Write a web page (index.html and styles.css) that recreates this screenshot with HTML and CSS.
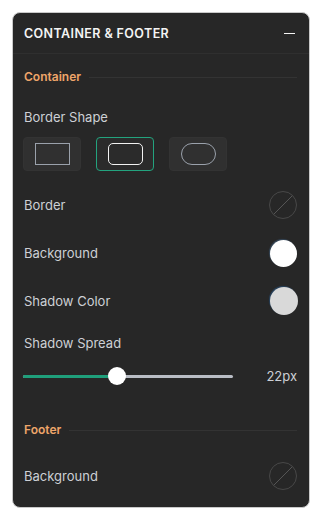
FILE: index.html
```html
<!doctype html>
<html lang="en">

<head>
  <meta charset="utf-8">
  <meta name="viewport" content="width=device-width, initial-scale=1">
  <title>Container &amp; Footer</title>
  <link rel="stylesheet" href="styles.css">
</head>

<body>

  <div class="panel">
    <div class="panel__header">
      <span class="panel__title">Container &amp; Footer</span>
      <button class="panel__toggle" type="button" aria-label="Collapse"></button>
    </div>

    <div class="panel__body">
      <div class="section-title section-title_first">Container</div>

      <div class="field-label">Border Shape</div>
      <div class="shapes">
        <button class="shape" type="button"><span class="shape__icon shape__icon_square"></span></button>
        <button class="shape shape_active" type="button"><span class="shape__icon shape__icon_rounded"></span></button>
        <button class="shape" type="button"><span class="shape__icon shape__icon_pill"></span></button>
      </div>

      <div class="row row_first">
        <span class="row__label">Border</span>
        <span class="swatch swatch_none"></span>
      </div>
      <div class="row">
        <span class="row__label">Background</span>
        <span class="swatch swatch_white"></span>
      </div>
      <div class="row">
        <span class="row__label">Shadow Color</span>
        <span class="swatch swatch_shadow"></span>
      </div>

      <div class="field-label field-label_spread">Shadow Spread</div>
      <div class="slider">
        <div class="slider__track">
          <div class="slider__fill" style="width: 44.8%;"></div>
          <div class="slider__thumb" style="left: 44.8%;"></div>
        </div>
        <span class="slider__value">22px</span>
      </div>

      <div class="section-title section-title_footer">Footer</div>

      <div class="row row_footer">
        <span class="row__label">Background</span>
        <span class="swatch swatch_none"></span>
      </div>
    </div>
  </div>

</body>

</html>
```

FILE: styles.css
```css
body {
  margin: 0;
  padding: 12px;
  font-family: Inter, "Noto Sans", sans-serif;
  background-color: #fff;
}

*,
*::before,
*::after {
  box-sizing: border-box;
}

.panel {
  width: 298px;
  height: 496px;
  background-color: #272727;
  border: 1px solid #c9c9c9;
  border-radius: 8px;
  overflow: hidden;
}

.panel__header {
  display: flex;
  align-items: center;
  justify-content: space-between;
  height: 41px;
  padding: 0 14px 0 11px;
  border-bottom: 1px solid #2f2f2f;
}

.panel__title {
  color: #f4f4f4;
  font-size: 12.5px;
  font-weight: 600;
  letter-spacing: 0.4px;
  text-transform: uppercase;
}

.panel__toggle {
  width: 11px;
  height: 1.5px;
  padding: 0;
  border: 0;
  background-color: #f4f4f4;
  margin-top: 1px;
}

.panel__body {
  padding: 12px 12px 0 11px;
}

.section-title {
  display: flex;
  align-items: center;
  gap: 8px;
  height: 20px;
  color: #eea56a;
  font-size: 12px;
  font-weight: 600;
}

.section-title::after {
  content: "";
  flex: 1;
  height: 1px;
  margin-top: 3px;
  background-color: #333;
}

.field-label {
  height: 20px;
  line-height: 20px;
  margin-top: 21px;
  color: #cdd0d5;
  font-size: 13px;
}

.field-label_spread {
  margin-top: 18px;
}

.shapes {
  display: flex;
  gap: 15px;
  margin: 10px 0 0 -1px;
}

.shape {
  display: flex;
  align-items: center;
  justify-content: center;
  width: 58px;
  height: 34px;
  padding: 0;
  background-color: #303030;
  border: 1px solid #333;
  border-radius: 4px;
}

.shape_active {
  border: 1.5px solid #23a37e;
  background-color: #2b2b2b;
}

.shape__icon {
  width: 35px;
  height: 22px;
  border: 1.5px solid #9aa1ab;
}

.shape__icon_rounded {
  border-color: #f2f2f2;
  border-radius: 5px;
}

.shape__icon_pill {
  border-radius: 11px;
}

.row {
  display: flex;
  align-items: center;
  justify-content: space-between;
  height: 28px;
  margin-top: 20px;
}

.row_footer {
  margin-top: 23px;
}

.row__label {
  color: #cdd0d5;
  font-size: 13px;
}

.swatch {
  width: 28px;
  height: 28px;
  border-radius: 50%;
}

.swatch_none {
  border: 1px solid #484848;
  background: linear-gradient(to bottom right, transparent calc(50% - 0.6px), #555 calc(50% - 0.6px), #555 calc(50% + 0.6px), transparent calc(50% + 0.6px));
}

.swatch_white {
  width: 27px;
  height: 27px;
  background-color: #fff;
  box-shadow: -1px -1px 1px rgba(70, 110, 150, 0.45);
}

.swatch_shadow {
  margin-right: -1px;
  background-color: #d9d9d9;
  box-shadow: -1px -1px 1px rgba(40, 70, 100, 0.9);
}

.slider {
  display: flex;
  align-items: center;
  justify-content: space-between;
  height: 18px;
  margin-top: 14px;
}

.slider__track {
  position: relative;
  width: 210px;
  height: 3px;
  margin-left: -1px;
  background-color: #b9bdc5;
  border-radius: 2px;
}

.slider__fill {
  height: 100%;
  background-color: #1f9f7b;
  border-radius: 2px;
}

.slider__thumb {
  position: absolute;
  top: 50%;
  width: 18px;
  height: 18px;
  margin: -9px 0 0 -9px;
  background-color: #fff;
  border-radius: 50%;
}

.slider__value {
  color: #cdd0d5;
  font-size: 13px;
}

.section-title_footer {
  margin-top: 34px;
}
```
